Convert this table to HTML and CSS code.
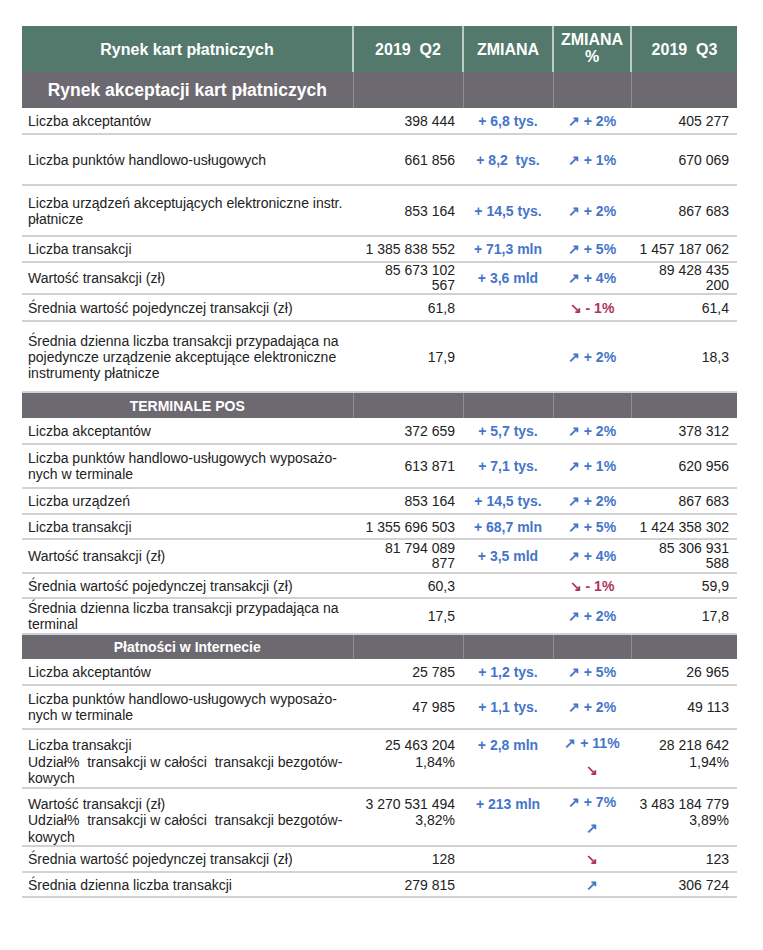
FILE: index.html
```html
<!DOCTYPE html>
<html lang="pl">
<head>
<meta charset="utf-8">
<link rel="stylesheet" href="styles.css">
</head>
<body>
<table class="market">
  <colgroup>
    <col class="c-label"><col class="c-q2"><col class="c-chg"><col class="c-pct"><col class="c-q3">
  </colgroup>
  <thead>
    <tr class="head">
      <th>Rynek kart płatniczych</th>
      <th>2019&nbsp;&nbsp;Q2</th>
      <th>ZMIANA</th>
      <th class="pct-head">ZMIANA<br>%</th>
      <th>2019&nbsp;&nbsp;Q3</th>
    </tr>
  </thead>
  <tbody>
    <tr class="section big h36"><td>Rynek akceptacji kart płatniczych</td><td></td><td></td><td></td><td></td></tr>
    <tr class="h26"><td>Liczba akceptantów</td><td class="num">398 444</td><td class="chg">+ 6,8 tys.</td><td class="pct up">↗ + 2%</td><td class="num">405 277</td></tr>
    <tr class="h51"><td>Liczba punktów handlowo-usługowych</td><td class="num">661 856</td><td class="chg">+ 8,2&nbsp;&nbsp;tys.</td><td class="pct up">↗ + 1%</td><td class="num">670 069</td></tr>
    <tr class="h51"><td>Liczba urządzeń akceptujących elektroniczne instr.<br>płatnicze</td><td class="num">853 164</td><td class="chg">+ 14,5 tys.</td><td class="pct up">↗ + 2%</td><td class="num">867 683</td></tr>
    <tr class="h26"><td>Liczba transakcji</td><td class="num">1 385 838 552</td><td class="chg">+ 71,3 mln</td><td class="pct up">↗ + 5%</td><td class="num">1 457 187 062</td></tr>
    <tr class="h32"><td>Wartość transakcji (zł)</td><td class="num tight">85 673 102<br>567</td><td class="chg">+ 3,6 mld</td><td class="pct up">↗ + 4%</td><td class="num tight">89 428 435<br>200</td></tr>
    <tr class="h27"><td>Średnia wartość pojedynczej transakcji (zł)</td><td class="num">61,8</td><td></td><td class="pct down">↘ - 1%</td><td class="num">61,4</td></tr>
    <tr class="h71"><td>Średnia dzienna liczba transakcji przypadająca na<br>pojedyncze urządzenie akceptujące elektroniczne<br>instrumenty płatnicze</td><td class="num">17,9</td><td></td><td class="pct up">↗ + 2%</td><td class="num">18,3</td></tr>

    <tr class="section h26"><td>TERMINALE POS</td><td></td><td></td><td></td><td></td></tr>
    <tr class="h26"><td>Liczba akceptantów</td><td class="num">372 659</td><td class="chg">+ 5,7 tys.</td><td class="pct up">↗ + 2%</td><td class="num">378 312</td></tr>
    <tr class="h44"><td>Liczba punktów handlowo-usługowych wyposażo-<br>nych w terminale</td><td class="num">613 871</td><td class="chg">+ 7,1 tys.</td><td class="pct up">↗ + 1%</td><td class="num">620 956</td></tr>
    <tr class="h26"><td>Liczba urządzeń</td><td class="num">853 164</td><td class="chg">+ 14,5 tys.</td><td class="pct up">↗ + 2%</td><td class="num">867 683</td></tr>
    <tr class="h25"><td>Liczba transakcji</td><td class="num">1 355 696 503</td><td class="chg">+ 68,7 mln</td><td class="pct up">↗ + 5%</td><td class="num">1 424 358 302</td></tr>
    <tr class="h34"><td>Wartość transakcji (zł)</td><td class="num tight">81 794 089<br>877</td><td class="chg">+ 3,5 mld</td><td class="pct up">↗ + 4%</td><td class="num tight">85 306 931<br>588</td></tr>
    <tr class="h25"><td>Średnia wartość pojedynczej transakcji (zł)</td><td class="num">60,3</td><td></td><td class="pct down">↘ - 1%</td><td class="num">59,9</td></tr>
    <tr class="h36"><td>Średnia dzienna liczba transakcji przypadająca na<br>terminal</td><td class="num">17,5</td><td></td><td class="pct up">↗ + 2%</td><td class="num">17,8</td></tr>

    <tr class="section h25"><td>Płatności w Internecie</td><td></td><td></td><td></td><td></td></tr>
    <tr class="h26"><td>Liczba akceptantów</td><td class="num">25 785</td><td class="chg">+ 1,2 tys.</td><td class="pct up">↗ + 5%</td><td class="num">26 965</td></tr>
    <tr class="h44"><td>Liczba punktów handlowo-usługowych wyposażo-<br>nych w terminale</td><td class="num">47 985</td><td class="chg">+ 1,1 tys.</td><td class="pct up">↗ + 2%</td><td class="num">49 113</td></tr>
    <tr class="h57 top"><td>Liczba transakcji<br>Udział%&nbsp;&nbsp;transakcji w całości&nbsp;&nbsp;transakcji bezgotów-<br>kowych</td><td class="num">25 463 204<br>1,84%</td><td class="chg">+ 2,8 mln</td><td class="pct"><span class="up">↗ + 11%</span><span class="down second">↘</span></td><td class="num">28 218 642<br>1,94%</td></tr>
    <tr class="h57 top"><td>Wartość transakcji (zł)<br>Udział%&nbsp;&nbsp;transakcji w całości&nbsp;&nbsp;transakcji bezgotów-<br>kowych</td><td class="num">3 270 531 494<br>3,82%</td><td class="chg">+ 213 mln</td><td class="pct"><span class="up">↗ + 7%</span><span class="up second">↗</span></td><td class="num">3 483 184 779<br>3,89%</td></tr>
    <tr class="h26"><td>Średnia wartość pojedynczej transakcji (zł)</td><td class="num">128</td><td></td><td class="pct down">↘</td><td class="num">123</td></tr>
    <tr class="h25"><td>Średnia dzienna liczba transakcji</td><td class="num">279 815</td><td></td><td class="pct up">↗</td><td class="num">306 724</td></tr>
  </tbody>
</table>
</body>
</html>
```
FILE: styles.css
```css
html, body {
  margin: 0;
  padding: 0;
  background: #ffffff;
}
body {
  padding: 26px 0 0 22px;
  font-family: "Liberation Sans", Arial, sans-serif;
  font-size: 14px;
  color: #222222;
}
.market {
  border-collapse: collapse;
  table-layout: fixed;
  width: 715px;
}
.c-label { width: 331px; }
.c-q2 { width: 110px; }
.c-chg { width: 90px; }
.c-pct { width: 78px; }
.c-q3 { width: 106px; }

.head th {
  height: 44px;
  padding: 0;
  background: #52796b;
  color: #ffffff;
  font-size: 16px;
  font-weight: bold;
  text-align: center;
  vertical-align: middle;
  border-left: 2px solid #b6ccc4;
  line-height: 17px;
}
.head th:first-child { border-left: none; }
.head .pct-head { padding-bottom: 2px; }

.market td {
  padding: 0 6px;
  line-height: 16px;
  vertical-align: middle;
  border-bottom: 2px solid #d2d2d2;
  white-space: nowrap;
}
.market td.num { text-align: right; padding-right: 8px; }
.market td.tight { line-height: 15px; }
.market td.chg {
  text-align: center;
  color: #4575c9;
  font-weight: bold;
  padding: 0;
}
.market td.pct {
  text-align: center;
  font-weight: bold;
  padding: 0;
}
.up { color: #4575c9; }
.down { color: #b0325e; }

.section td {
  background: #6c6a70;
  color: #ffffff;
  font-weight: bold;
  text-align: center;
  border-bottom: none;
  border-left: 1px solid #8f8d93;
}
.section td:first-child { border-left: none; }
.section.big td:first-child { font-size: 17.5px; }

.market .top td { vertical-align: top; padding-top: 7px; line-height: 16.5px; }
.market .top td.pct { padding-top: 5px; }
.pct .second { display: block; margin-top: 10px; }

.h25 { height: 25px; }
.h26 { height: 26px; }
.h27 { height: 27px; }
.h32 { height: 32px; }
.h34 { height: 34px; }
.h36 { height: 36px; }
.h44 { height: 44px; }
.h51 { height: 51px; }
.h57 { height: 57px; }
.h71 { height: 71px; }
```
